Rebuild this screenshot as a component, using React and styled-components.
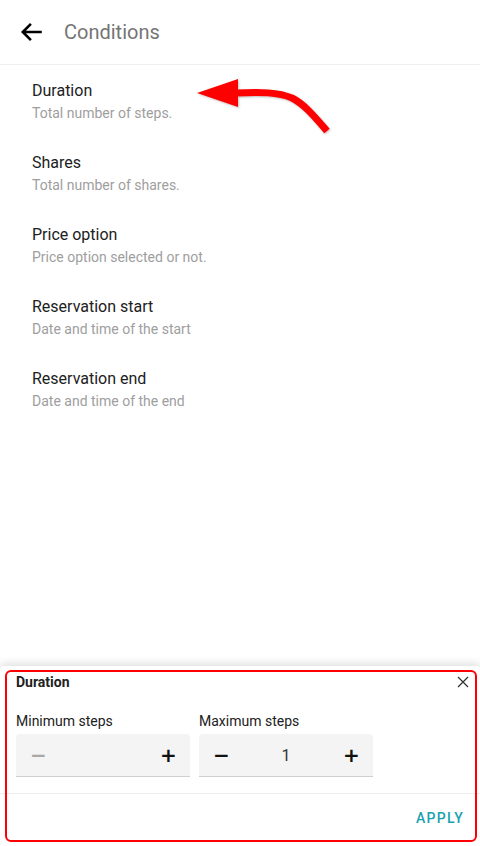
import React from "react";
import styled, { createGlobalStyle } from "styled-components";

const Global = createGlobalStyle`
  html, body { margin: 0; padding: 0; background: #fff; }
  body { font-family: Roboto, "Noto Sans", sans-serif; }
`;

const Page = styled.div`
  position: relative;
  width: 480px;
  height: 846px;
  display: flex;
  flex-direction: column;
  overflow: hidden;
  background: #fff;
`;

const Header = styled.header`
  height: 64px;
  display: flex;
  align-items: center;
  padding-left: 18px;
  gap: 18px;
  border-bottom: 1px solid #eeeeee;
  flex-shrink: 0;
`;

const BackButton = styled.button`
  border: 0;
  background: none;
  padding: 0;
  width: 28px;
  height: 28px;
  display: flex;
  align-items: center;
  justify-content: center;
  cursor: pointer;
`;

const Title = styled.h1`
  margin: 0;
  font-size: 20px;
  font-weight: 400;
  color: #757575;
`;

const List = styled.ul`
  list-style: none;
  margin: 0;
  padding: 0;
  flex: 1;
`;

const Item = styled.li`
  height: 72px;
  padding: 0 32px;
  display: flex;
  flex-direction: column;
  justify-content: center;
`;

const ItemTitle = styled.div`
  font-size: 16px;
  line-height: 24px;
  color: #212121;
`;

const ItemSub = styled.div`
  font-size: 14px;
  line-height: 20px;
  color: #9e9e9e;
`;

const Sheet = styled.section`
  position: relative;
  flex-shrink: 0;
  height: 180px;
  box-sizing: border-box;
  background: #fff;
  border-radius: 4px 4px 0 0;
  box-shadow: 0 -3px 8px rgba(0, 0, 0, 0.12);
  display: flex;
  flex-direction: column;
`;

const SheetHead = styled.div`
  display: flex;
  align-items: center;
  justify-content: space-between;
  padding: 8px 10px 0 16px;
  height: 16px;
`;

const SheetTitle = styled.div`
  font-size: 14px;
  font-weight: 700;
  color: #212121;
`;

const Close = styled.button`
  border: 0;
  background: none;
  padding: 0;
  display: flex;
  cursor: pointer;
`;

const Fields = styled.div`
  display: flex;
  gap: 9px;
  padding: 22px 16px 0;
`;

const Field = styled.div`
  width: 174px;
  display: flex;
  flex-direction: column;
  gap: 4px;
`;

const Label = styled.div`
  font-size: 14px;
  line-height: 18px;
  color: #212121;
`;

const Stepper = styled.div`
  height: 43px;
  display: flex;
  align-items: center;
  justify-content: space-between;
  padding: 0 14px;
  background: #f4f4f4;
  border-radius: 4px 4px 0 0;
  border-bottom: 1px solid #cfcfcf;
  box-sizing: border-box;
`;

const StepBtn = styled.span`
  font-size: 20px;
  font-weight: 700;
  line-height: 1;
  width: 16px;
  text-align: center;
  color: ${(p) => (p.$disabled ? "#a8a8a8" : "#111")};
  font-family: "DejaVu Sans", sans-serif;
`;

const Value = styled.span`
  font-size: 16px;
  color: #333;
`;

const Footer = styled.div`
  margin-top: auto;
  height: 48px;
  border-top: 1px solid #eeeeee;
  display: flex;
  align-items: center;
  justify-content: flex-end;
  padding: 0 16px 4px;
`;

const Apply = styled.button`
  border: 0;
  background: none;
  font-family: Roboto, sans-serif;
  font-size: 14px;
  font-weight: 500;
  letter-spacing: 1.3px;
  color: #1ba1b0;
  cursor: pointer;
  padding: 0;
`;

const Highlight = styled.div`
  position: absolute;
  left: 5px;
  top: 670px;
  width: 472px;
  height: 172px;
  box-sizing: border-box;
  border: 2px solid #ff0000;
  border-radius: 6px;
  pointer-events: none;
`;

const Pointer = styled.svg`
  position: absolute;
  left: 196px;
  top: 78px;
  pointer-events: none;
  filter: drop-shadow(1px 1px 1px rgba(0, 0, 0, 0.25));
`;

const conditions = [
  ["Duration", "Total number of steps."],
  ["Shares", "Total number of shares."],
  ["Price option", "Price option selected or not."],
  ["Reservation start", "Date and time of the start"],
  ["Reservation end", "Date and time of the end"],
];

export default function App() {
  return (
    <>
      <Global />
      <Page>
        <Header>
          <BackButton aria-label="back">
            <svg width="26" height="26" viewBox="0 0 24 24">
              <path d="M21 12H4M11 4.5L3.5 12L11 19.5" fill="none" stroke="#000" strokeWidth="2.4" />
            </svg>
          </BackButton>
          <Title>Conditions</Title>
        </Header>
        <List>
          {conditions.map(([t, s]) => (
            <Item key={t}>
              <ItemTitle>{t}</ItemTitle>
              <ItemSub>{s}</ItemSub>
            </Item>
          ))}
        </List>
        <Sheet>
          <SheetHead>
            <SheetTitle>Duration</SheetTitle>
            <Close aria-label="close">
              <svg width="14" height="14" viewBox="0 0 14 14">
                <path d="M2 2L12 12M12 2L2 12" stroke="#333" strokeWidth="1.3" />
              </svg>
            </Close>
          </SheetHead>
          <Fields>
            <Field>
              <Label>Minimum steps</Label>
              <Stepper>
                <StepBtn $disabled>−</StepBtn>
                <Value></Value>
                <StepBtn>+</StepBtn>
              </Stepper>
            </Field>
            <Field>
              <Label>Maximum steps</Label>
              <Stepper>
                <StepBtn>−</StepBtn>
                <Value>1</Value>
                <StepBtn>+</StepBtn>
              </Stepper>
            </Field>
          </Fields>
          <Footer>
            <Apply>APPLY</Apply>
          </Footer>
        </Sheet>
        <Highlight />
        <Pointer width="140" height="64" viewBox="0 0 140 64">
          <path d="M1 15L42 1L42 29Z" fill="#ff0000" />
          <path d="M40 15C65 14 82 14 96 20C108 26 118 38 131 53" fill="none" stroke="#ff0000" strokeWidth="7" />
        </Pointer>
      </Page>
    </>
  );
}
